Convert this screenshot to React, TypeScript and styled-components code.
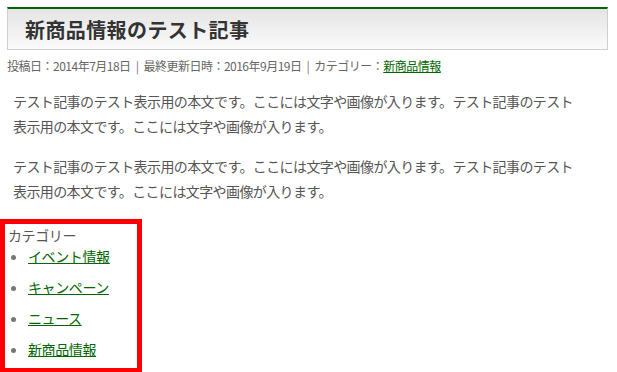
import { FC } from 'react';
import styled, { createGlobalStyle } from 'styled-components';

const GlobalStyle = createGlobalStyle`
    body {
        margin: 0;
        background: #fff;
        font-family: 'Noto Sans CJK JP', 'Noto Sans', sans-serif;
        color: #555;
    }
`;

const categories = ['イベント情報', 'キャンペーン', 'ニュース', '新商品情報'];

const bodyText =
    'テスト記事のテスト表示用の本文です。ここには文字や画像が入ります。テスト記事のテスト表示用の本文です。ここには文字や画像が入ります。';

const Article: FC = () => (
    <ArticleWrap>
        <Title>新商品情報のテスト記事</Title>
        <Meta>
            投稿日：2014年7月18日<Sep>|</Sep>最終更新日時：2016年9月19日<Sep>|</Sep>カテゴリー：
            <MetaLink href='#'>新商品情報</MetaLink>
        </Meta>
        <Body>
            <p>{bodyText}</p>
            <p>{bodyText}</p>
        </Body>
    </ArticleWrap>
);

const CategoryWidget: FC = () => (
    <Widget>
        <WidgetTitle>カテゴリー</WidgetTitle>
        <CategoryList>
            {categories.map((name) => (
                <CategoryItem key={name}>
                    <CategoryLink href='#'>{name}</CategoryLink>
                </CategoryItem>
            ))}
        </CategoryList>
    </Widget>
);

const App: FC = () => (
    <>
        <GlobalStyle />
        <Page>
            <Article />
            <CategoryWidget />
        </Page>
    </>
);

export default App;

const Page = styled.div`
    width: 617px;
    height: 372px;
    overflow: hidden;
`;

const ArticleWrap = styled.div`
    padding: 7px 9px 0 7px;
`;

const Title = styled.h1`
    margin: 0;
    height: 40px;
    padding: 0 0 0 17px;
    display: flex;
    align-items: center;
    border: 1px solid #cfcfcf;
    border-top: 2px solid #006400;
    background: linear-gradient(to bottom, #e4e4e4 0%, #fbfbfb 100%);
    color: #333;
    font-size: 20px;
    font-weight: bold;
    letter-spacing: 0.4px;
`;

const Meta = styled.div`
    margin-top: 7px;
    font-size: 12px;
    line-height: 18px;
    color: #666;
    letter-spacing: -0.5px;
    white-space: nowrap;
`;

const Sep = styled.span`
    margin: 0 5px;
    color: #777;
`;

const MetaLink = styled.a`
    color: #060;
    text-decoration: underline;
`;

const Body = styled.div`
    margin-top: 14px;
    padding-left: 6px;
    width: 570px;

    p {
        margin: 0 0 15px;
        font-size: 14px;
        line-height: 25px;
        letter-spacing: -0.6px;
        color: #555;
    }
`;

const Widget = styled.div`
    width: 129px;
    margin-top: 1px;
    padding: 1px 0 9px 3px;
    border: 5px solid #f00;
`;

const WidgetTitle = styled.div`
    font-size: 14px;
    line-height: 20px;
    color: #555;
    letter-spacing: -0.4px;
`;

const CategoryList = styled.ul`
    margin: 1px 0 0;
    padding-left: 20px;
    color: #777;
`;

const CategoryItem = styled.li`
    font-size: 14px;
    line-height: 20px;
    margin-top: 11px;

    &:first-child {
        margin-top: 0;
    }
`;

const CategoryLink = styled.a`
    color: #060;
    text-decoration: underline;
    letter-spacing: -0.4px;
`;
